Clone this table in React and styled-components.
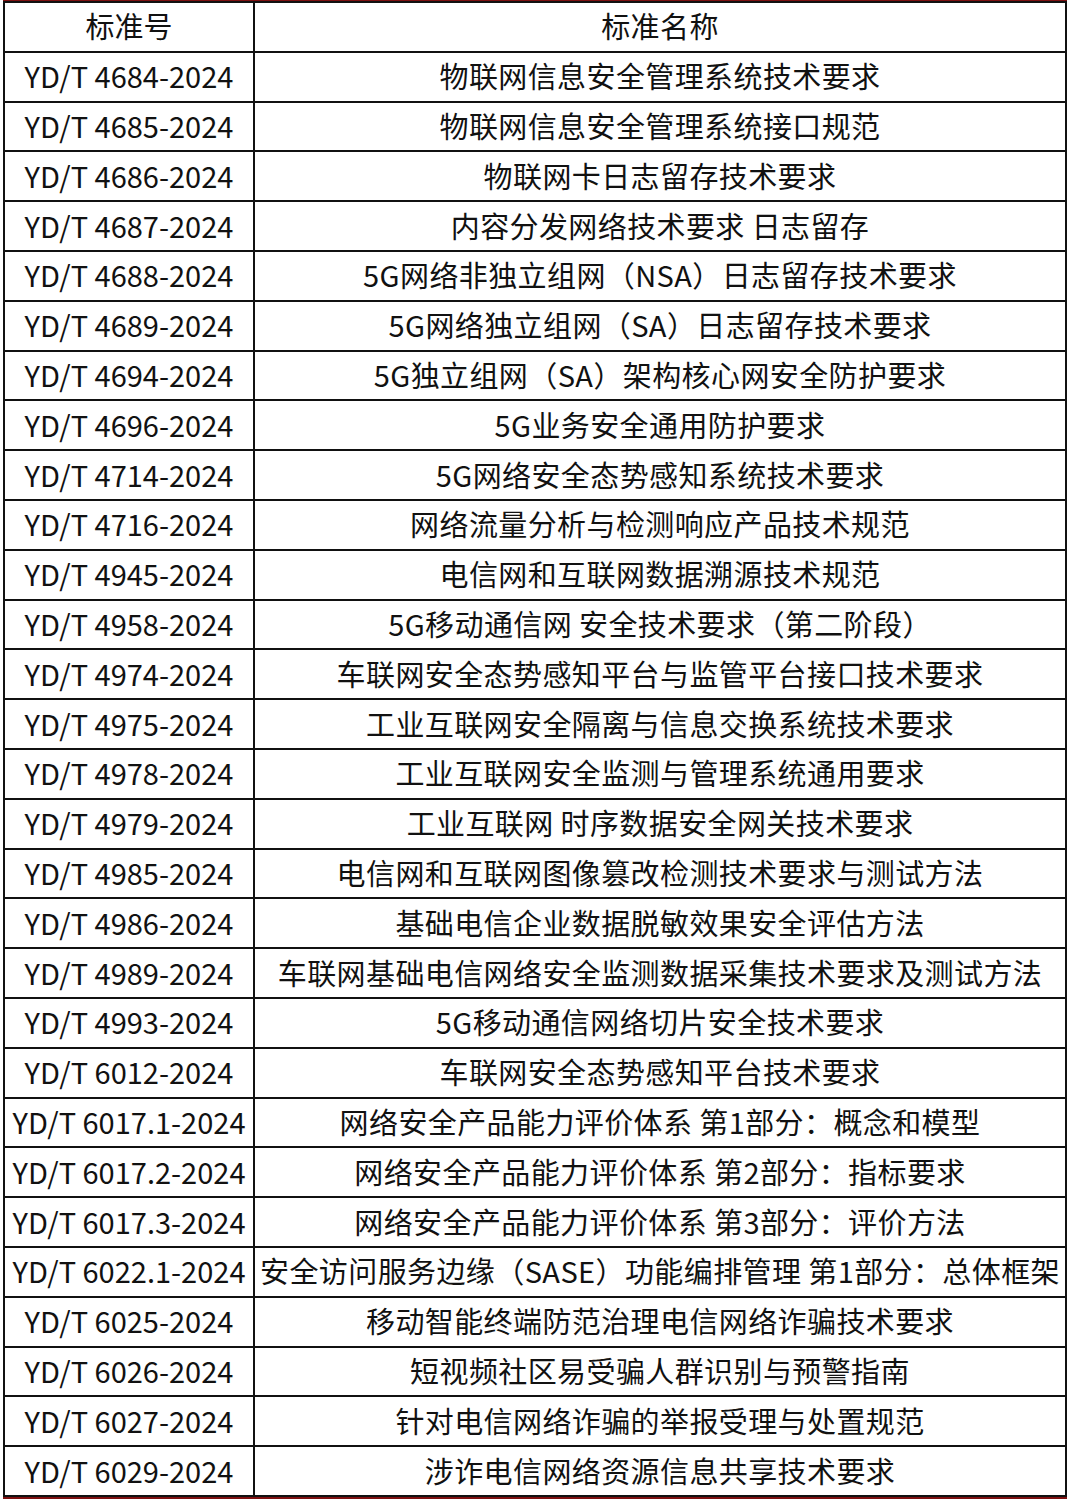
import styled, { createGlobalStyle } from 'styled-components';

const rows = [
    ['YD/T 4684-2024', '物联网信息安全管理系统技术要求'],
    ['YD/T 4685-2024', '物联网信息安全管理系统接口规范'],
    ['YD/T 4686-2024', '物联网卡日志留存技术要求'],
    ['YD/T 4687-2024', '内容分发网络技术要求 日志留存'],
    ['YD/T 4688-2024', '5G网络非独立组网（NSA）日志留存技术要求'],
    ['YD/T 4689-2024', '5G网络独立组网（SA）日志留存技术要求'],
    ['YD/T 4694-2024', '5G独立组网（SA）架构核心网安全防护要求'],
    ['YD/T 4696-2024', '5G业务安全通用防护要求'],
    ['YD/T 4714-2024', '5G网络安全态势感知系统技术要求'],
    ['YD/T 4716-2024', '网络流量分析与检测响应产品技术规范'],
    ['YD/T 4945-2024', '电信网和互联网数据溯源技术规范'],
    ['YD/T 4958-2024', '5G移动通信网 安全技术要求（第二阶段）'],
    ['YD/T 4974-2024', '车联网安全态势感知平台与监管平台接口技术要求'],
    ['YD/T 4975-2024', '工业互联网安全隔离与信息交换系统技术要求'],
    ['YD/T 4978-2024', '工业互联网安全监测与管理系统通用要求'],
    ['YD/T 4979-2024', '工业互联网 时序数据安全网关技术要求'],
    ['YD/T 4985-2024', '电信网和互联网图像篡改检测技术要求与测试方法'],
    ['YD/T 4986-2024', '基础电信企业数据脱敏效果安全评估方法'],
    ['YD/T 4989-2024', '车联网基础电信网络安全监测数据采集技术要求及测试方法'],
    ['YD/T 4993-2024', '5G移动通信网络切片安全技术要求'],
    ['YD/T 6012-2024', '车联网安全态势感知平台技术要求'],
    ['YD/T 6017.1-2024', '网络安全产品能力评价体系 第1部分：概念和模型'],
    ['YD/T 6017.2-2024', '网络安全产品能力评价体系 第2部分：指标要求'],
    ['YD/T 6017.3-2024', '网络安全产品能力评价体系 第3部分：评价方法'],
    ['YD/T 6022.1-2024', '安全访问服务边缘（SASE）功能编排管理 第1部分：总体框架'],
    ['YD/T 6025-2024', '移动智能终端防范治理电信网络诈骗技术要求'],
    ['YD/T 6026-2024', '短视频社区易受骗人群识别与预警指南'],
    ['YD/T 6027-2024', '针对电信网络诈骗的举报受理与处置规范'],
    ['YD/T 6029-2024', '涉诈电信网络资源信息共享技术要求'],
];

export default function App() {
    return (
        <>
            <GlobalStyle />
            <Frame>
                <Table>
                    <colgroup>
                        <col style={{ width: 250 }} />
                        <col />
                    </colgroup>
                    <thead>
                        <tr>
                            <Cell as="th">标准号</Cell>
                            <Cell as="th" $wide>标准名称</Cell>
                        </tr>
                    </thead>
                    <tbody>
                        {rows.map(([code, name]) => (
                            <tr key={code}>
                                <Cell>{code}</Cell>
                                <Cell $wide>{name}</Cell>
                            </tr>
                        ))}
                    </tbody>
                </Table>
            </Frame>
        </>
    );
};

const GlobalStyle = createGlobalStyle`
    html, body {
        margin: 0;
        padding: 0;
        background: #fff;
    }
    body {
        font-family: "Noto Sans CJK SC", "Noto Sans", sans-serif;
        color: #111;
    }
`;

const Frame = styled.div`
    width: 1064px;
    margin-left: 3px;
    border-top: 1px solid #7d1010;
    border-bottom: 2px solid #7d1010;
`;

const Table = styled.table`
    width: 100%;
    table-layout: fixed;
    border-collapse: collapse;
`;

const Cell = styled.td`
    height: 45.8px;
    padding: 0 0 2px;
    border: 2px solid #111;
    text-align: center;
    vertical-align: middle;
    font-size: 29px;
    font-weight: 400;
    line-height: 1;
    letter-spacing: ${(props) => (props.$wide ? '0.4px' : '0')};
    white-space: nowrap;
    color: #111;
`;
